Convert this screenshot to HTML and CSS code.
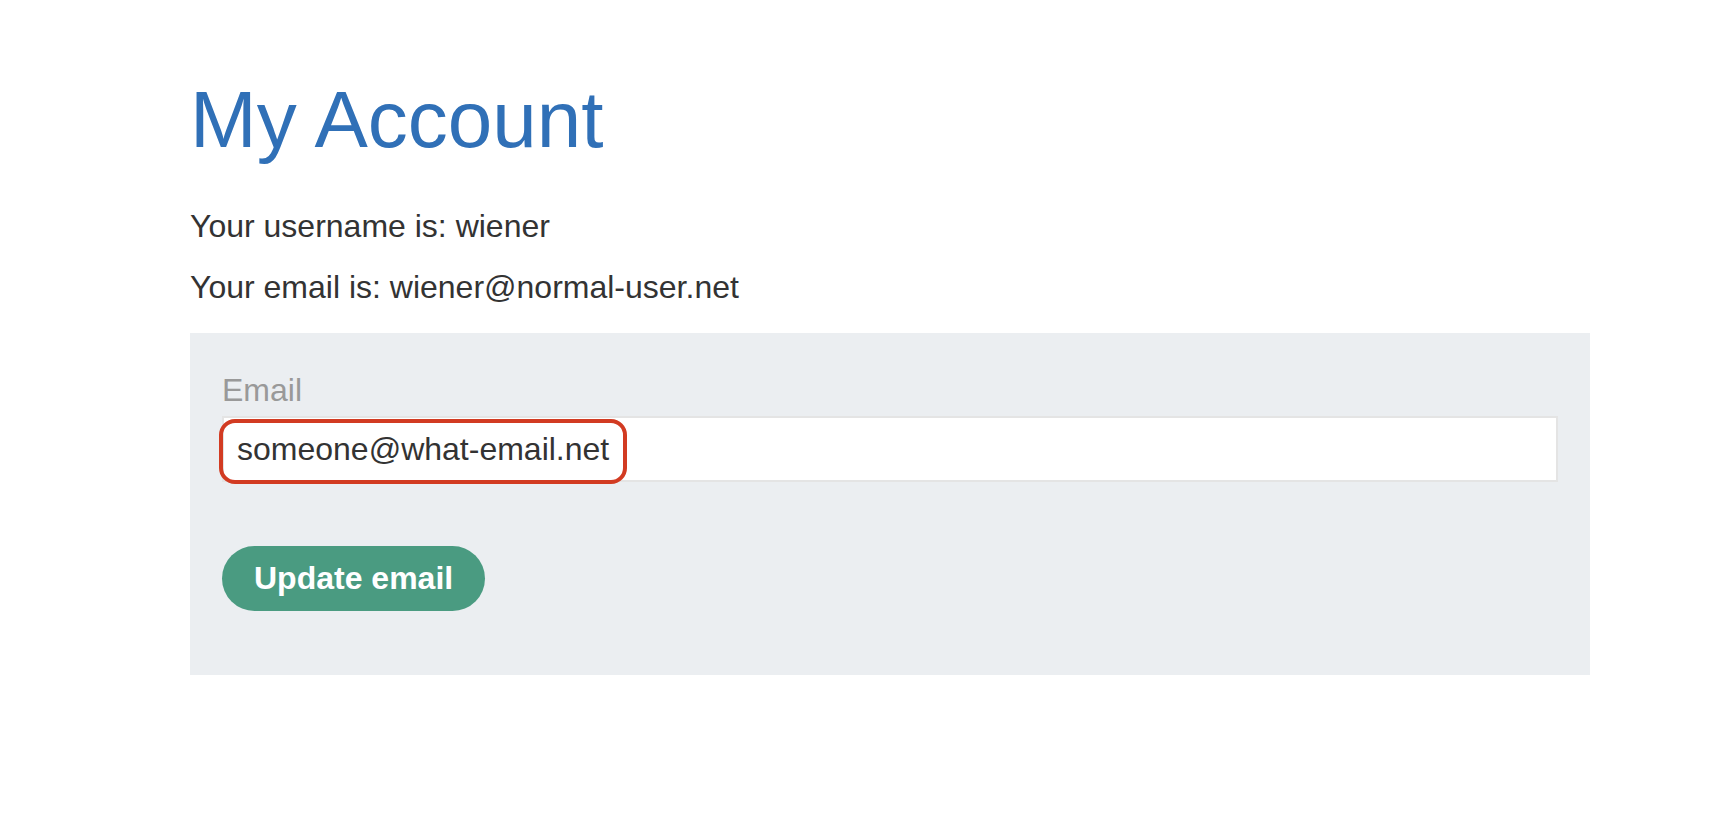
FILE: index.html
```html
<!DOCTYPE html>
<html lang="en">
<head>
<meta charset="utf-8">
<title>My Account</title>
<link rel="stylesheet" href="styles.css">
</head>
<body>
<div class="container">
  <h1 class="title">My Account</h1>
  <p class="info">Your username is: wiener</p>
  <p class="info">Your email is: wiener@normal-user.net</p>
  <form class="panel">
    <label class="label" for="email">Email</label>
    <div class="field">
      <input class="input" id="email" type="text" value="someone@what-email.net">
      <span class="highlight"></span>
    </div>
    <button class="btn" type="button">Update email</button>
  </form>
</div>
</body>
</html>
```
FILE: styles.css
```css
html, body {
  margin: 0;
  padding: 0;
  background: #ffffff;
}
body {
  font-family: "Liberation Sans", Arial, Helvetica, sans-serif;
  color: #333333;
  font-size: 32px;
}
.container {
  width: 1400px;
  padding: 74px 0 0 190px;
}
.title {
  margin: 0 0 43px 0;
  font-size: 80px;
  line-height: 91px;
  font-weight: normal;
  color: #3070b7;
}
.info {
  margin: 0;
  font-size: 32px;
  line-height: 36px;
}
.info + .info {
  margin-top: 25px;
}
.panel {
  margin-top: 28px;
  background: #ebeef1;
  padding: 39px 32px 64px 32px;
  display: flex;
  flex-direction: column;
  align-items: flex-start;
}
.label {
  display: block;
  font-size: 32px;
  line-height: 36px;
  color: #999999;
  margin-bottom: 8px;
}
.field {
  position: relative;
  width: 100%;
}
.input {
  display: block;
  box-sizing: border-box;
  width: 100%;
  height: 66px;
  margin: 0;
  border: 2px solid #e4e4e4;
  background: #ffffff;
  padding: 0 13px;
  font-family: "Liberation Sans", Arial, Helvetica, sans-serif;
  font-size: 32px;
  color: #333333;
  outline: none;
}
.highlight {
  position: absolute;
  left: -3px;
  top: 3px;
  width: 408px;
  height: 65px;
  box-sizing: border-box;
  border: 4px solid #d23b22;
  border-radius: 16px;
  pointer-events: none;
}
.btn {
  margin-top: 64px;
  height: 65px;
  padding: 0 32px;
  border: none;
  border-radius: 33px;
  background: #4a9b81;
  color: #ffffff;
  font-family: "Liberation Sans", Arial, Helvetica, sans-serif;
  font-size: 32px;
  font-weight: bold;
  line-height: 65px;
  cursor: pointer;
}
```
